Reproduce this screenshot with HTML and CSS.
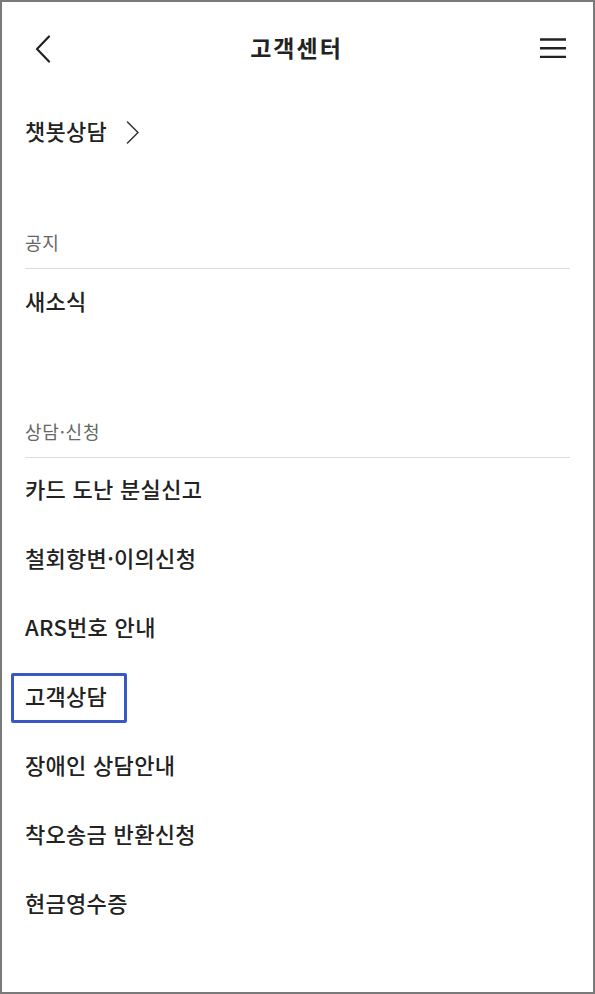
FILE: index.html
```html
<!DOCTYPE html>
<html lang="ko">
<head>
<meta charset="utf-8">
<title>고객센터</title>
<link rel="stylesheet" href="styles.css">
</head>
<body>
<div class="page">
  <header class="topbar">
    <span class="back" aria-label="뒤로">
      <svg width="16" height="28" viewBox="0 0 16 28"><path d="M14 1.5 L2 14 L14 26.5" fill="none" stroke="#222" stroke-width="2.2" stroke-linecap="round" stroke-linejoin="round"/></svg>
    </span>
    <h1 class="title">고객센터</h1>
    <span class="menu" aria-label="메뉴">
      <svg width="26" height="21" viewBox="0 0 26 21"><path d="M0 1.5 H26 M0 10.2 H26 M0 18.9 H26" stroke="#222" stroke-width="2.4"/></svg>
    </span>
  </header>

  <div class="chatbot">
    <span>챗봇상담</span>
    <svg class="chev" width="14" height="23" viewBox="0 0 14 23"><path d="M1.5 1 L12 11.5 L1.5 22" fill="none" stroke="#333" stroke-width="1.5" stroke-linecap="round" stroke-linejoin="round"/></svg>
  </div>

  <section class="group group-notice">
    <h2 class="group-title">공지</h2>
    <div class="item item-first">새소식</div>
  </section>

  <section class="group group-apply">
    <h2 class="group-title">상담·신청</h2>
    <ul class="list">
      <li class="item">카드 도난 분실신고</li>
      <li class="item">철회항변·이의신청</li>
      <li class="item">ARS번호 안내</li>
      <li class="item highlighted">고객상담</li>
      <li class="item">장애인 상담안내</li>
      <li class="item">착오송금 반환신청</li>
      <li class="item">현금영수증</li>
    </ul>
  </section>
</div>
</body>
</html>
```

FILE: styles.css
```css
html, body {
  margin: 0;
  padding: 0;
  background: #fff;
}

body {
  font-family: "Noto Sans CJK KR", "Noto Sans", sans-serif;
  color: #222;
}

.page {
  box-sizing: border-box;
  width: 595px;
  height: 994px;
  border: 2px solid #7a7a7a;
  padding: 0 23px;
  overflow: hidden;
}

.topbar {
  height: 92px;
  display: flex;
  align-items: center;
  justify-content: space-between;
}

.back {
  display: flex;
  margin-left: 10px;
  margin-top: 2px;
}

.menu {
  display: flex;
  margin-right: 4px;
}

.title {
  margin: -2px -2px 0 0;
  font-size: 23px;
  font-weight: 700;
  line-height: 28px;
  color: #222;
  letter-spacing: 2px;
}

.chatbot {
  height: 76px;
  display: flex;
  align-items: center;
  gap: 19px;
  font-size: 22px;
  font-weight: 500;
  line-height: 28px;
  letter-spacing: 0.3px;
}

.chatbot span {
  margin-top: -4px;
}

.chatbot .chev {
  margin-top: 0;
}

.group-title {
  margin: 0;
  font-size: 18px;
  font-weight: 400;
  line-height: 24px;
  color: #666;
  letter-spacing: 0.8px;
  padding-bottom: 14px;
  border-bottom: 1px solid #dcdcdc;
}

.group-notice .group-title {
  margin-top: 60px;
}

.group-apply .group-title {
  margin-top: 84px;
}

.list {
  list-style: none;
  margin: 0;
  padding: 0;
}

.item {
  position: relative;
  font-size: 22px;
  font-weight: 500;
  line-height: 28px;
  letter-spacing: 0.3px;
  color: #222;
  padding: 16px 0 25px;
}

.item-first {
  padding: 17px 0 21px;
}

.highlighted::after {
  content: "";
  position: absolute;
  left: -14px;
  top: 8px;
  width: 116px;
  height: 50px;
  box-sizing: border-box;
  border: 3px solid #3a58c4;
  border-radius: 2px;
}
```
